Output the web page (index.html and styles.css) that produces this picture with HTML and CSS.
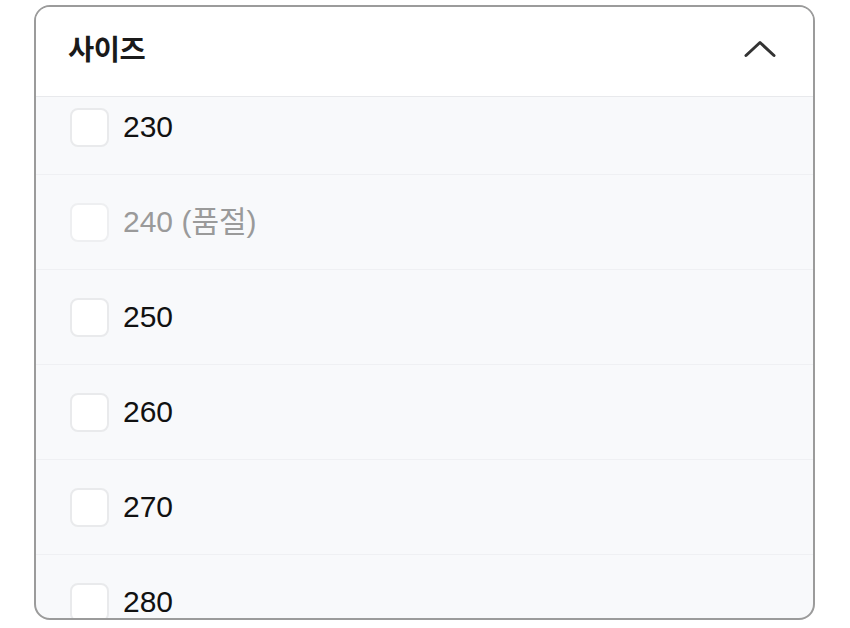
FILE: index.html
```html
<!DOCTYPE html>
<html lang="ko">
<head>
<meta charset="utf-8">
<link rel="stylesheet" href="styles.css">
</head>
<body>
<div class="panel">
  <div class="header">
    <span class="title">사이즈</span>
    <svg class="chevron" width="34" height="20" viewBox="0 0 34 20"><path d="M3 16.5 L17 3.5 L31 16.5" fill="none" stroke="#333" stroke-width="3" stroke-linecap="round" stroke-linejoin="round"/></svg>
  </div>
  <div class="list">
    <div class="rows">
      <label class="row"><span class="box"></span><span class="label">230</span></label>
      <label class="row soldout"><span class="box"></span><span class="label">240 (품절)</span></label>
      <label class="row"><span class="box"></span><span class="label">250</span></label>
      <label class="row"><span class="box"></span><span class="label">260</span></label>
      <label class="row"><span class="box"></span><span class="label">270</span></label>
      <label class="row"><span class="box"></span><span class="label">280</span></label>
    </div>
  </div>
</div>
</body>
</html>
```

FILE: styles.css
```css
html, body {
  margin: 0;
  padding: 0;
  background: #ffffff;
}
body {
  font-family: "Liberation Sans", "Noto Sans CJK KR", Arial, sans-serif;
}
.panel {
  margin: 5px 0 0 34px;
  width: 781px;
  height: 615px;
  box-sizing: border-box;
  border: 2px solid #9b9b9b;
  border-radius: 16px;
  overflow: hidden;
  display: flex;
  flex-direction: column;
  background: #f8f9fb;
}
.header {
  flex: 0 0 auto;
  height: 89px;
  background: #ffffff;
  border-bottom: 1px solid #e8e9ec;
  display: flex;
  align-items: center;
  justify-content: space-between;
  padding: 0 36px 0 32px;
}
.title {
  font-family: "Noto Sans CJK KR", sans-serif;
  font-weight: 700;
  font-size: 28.5px;
  color: #1a1a1a;
  letter-spacing: -0.5px;
  margin-top: -8px;
}
.chevron {
  display: block;
  margin-top: -6px;
}
.list {
  flex: 1 1 auto;
  overflow: hidden;
}
.rows {
  margin-top: -17px;
  display: flex;
  flex-direction: column;
}
.row {
  height: 94px;
  flex: 0 0 auto;
  border-bottom: 1px solid #eff0f3;
  display: flex;
  align-items: center;
  padding-left: 34px;
  gap: 14px;
}
.box {
  width: 39px;
  height: 39px;
  box-sizing: border-box;
  border: 2px solid #e9eaec;
  border-radius: 8px;
  background: #ffffff;
  flex: 0 0 auto;
}
.label {
  font-size: 30px;
  color: #111111;
  line-height: 1;
}
.soldout .label {
  color: #9a9a9a;
}
.soldout .box {
  border-color: #eeeff1;
}
```
